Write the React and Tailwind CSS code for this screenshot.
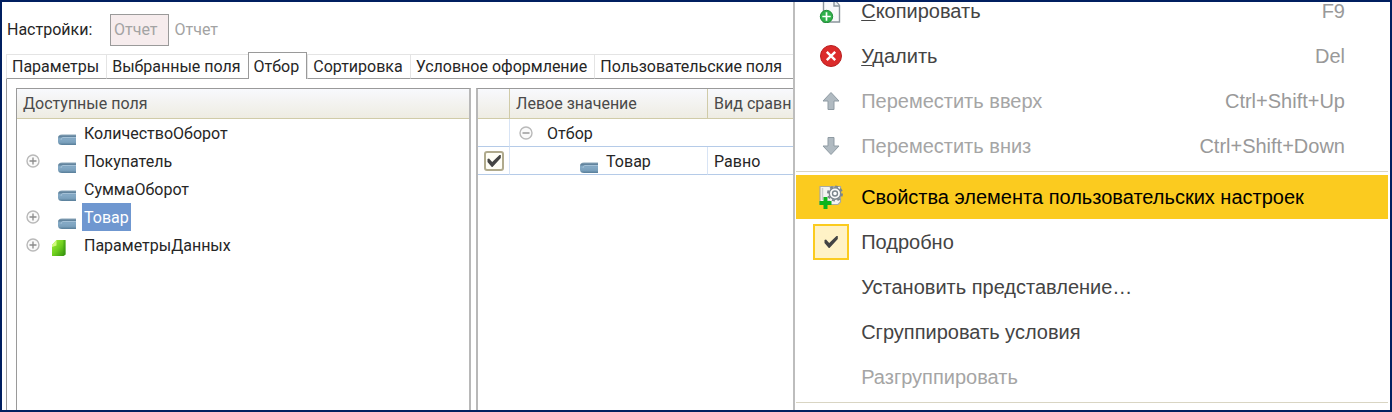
import React, { useState } from 'react';

const TABS = ['Параметры', 'Выбранные поля', 'Отбор', 'Сортировка', 'Условное оформление', 'Пользовательские поля'];

const FIELDS = [
  { name: 'КоличествоОборот', icon: 'field' },
  { name: 'Покупатель', icon: 'field', expandable: true },
  { name: 'СуммаОборот', icon: 'field' },
  { name: 'Товар', icon: 'field', expandable: true },
  { name: 'ПараметрыДанных', icon: 'params', expandable: true },
];

function Expander({ open }) {
  return (
    <svg width="14" height="14" viewBox="0 0 14 14" fill="none">
      <circle cx="7" cy="7" r="6" fill="#fafafa" stroke="#b9b9b9" strokeWidth="1.4" />
      <path d={open ? 'M3.5 7h7' : 'M3.5 7h7M7 3.5v7'} stroke="#8c8c8c" strokeWidth="1.3" />
    </svg>
  );
}

function FieldIcon() {
  return (
    <svg width="24" height="18" viewBox="0 0 24 18">
      <defs>
        <linearGradient id="bar" x1="0" y1="0" x2="0" y2="1">
          <stop offset="0" stopColor="#8aa5b8" />
          <stop offset="0.2" stopColor="#5f829c" />
          <stop offset="0.4" stopColor="#86abc7" />
          <stop offset="0.75" stopColor="#7aa0bc" />
          <stop offset="1" stopColor="#577d98" />
        </linearGradient>
      </defs>
      <path d="M24 7.5H10Q6 7.5 6 11v3.5Q6 18 10 18h14z" fill="url(#bar)" />
      <path d="M24 10.500H11Q9 10.500 9 13" fill="none" stroke="#a3c0d6" />
    </svg>
  );
}

function ParamsIcon() {
  return (
    <svg width="24" height="18" viewBox="0 0 24 18">
      <defs>
        <linearGradient id="leaf" x1="0" y1="0" x2="1" y2="1">
          <stop offset="0" stopColor="#a5ee3c" />
          <stop offset="0.5" stopColor="#6fcf1e" />
          <stop offset="1" stopColor="#2f8d0c" />
        </linearGradient>
      </defs>
      <path d="M4.500 1h9v14.500l-2 1.500H0V6z" fill="url(#leaf)" />
      <path d="M4.500 1v5.500L0 8V6z" fill="#d0fa7c" />
      <path d="M11.500 1h2v14.500l-2 1.500z" fill="#3c9a14" opacity="0.6" />
    </svg>
  );
}

function CopyIcon() {
  return (
    <svg width="24" height="24" viewBox="0 0 24 24" fill="none">
      <path d="M4.500 .5h11l5 6v16.500h-16z" fill="#f7f9fa" stroke="#8a959c" strokeWidth="1.4" />
      <path d="M15 1v6h5.500" fill="#e8edf0" stroke="#8a959c" strokeWidth="1.4" />
      <circle cx="7.500" cy="17.500" r="6.200" fill="#2fb04a" stroke="#218d38" />
      <path d="M7.500 13.300v8.400M3.300 17.500h8.400" stroke="#fff" strokeWidth="1.7" />
    </svg>
  );
}

function DeleteIcon() {
  return (
    <svg width="22" height="22" viewBox="0 0 22 22" fill="none">
      <circle cx="11" cy="11" r="10.500" fill="#dc2b2b" stroke="#b81f1f" />
      <path d="M6.800 6.800l8.400 8.400M15.200 6.800l-8.400 8.400" stroke="#fff" strokeWidth="2.400" />
    </svg>
  );
}

function ArrowIcon({ down }) {
  return (
    <svg width="18" height="20" viewBox="0 0 18 20">
      <path
        d={down ? 'M6 1.500h6v8.500h5L9 18.500 1 10h5z' : 'M9 1.500L17 10h-5v8.500H6V10H1z'}
        fill="#b0bac1"
        stroke="#8f9ba3"
        strokeLinejoin="round"
      />
    </svg>
  );
}

function SettingsIcon() {
  return (
    <svg width="26" height="26" viewBox="0 0 26 26" fill="none">
      <path d="M2 2.500h20.500V18L20 20.500H2z" fill="#f4f4f2" stroke="#a8aaa2" strokeWidth="1.200" />
      <path d="M4.500 4v12M11 16v4" stroke="#c9ccce" strokeWidth="1.500" />
      <circle cx="17" cy="9.500" r="7" stroke="#7c868d" strokeWidth="2" strokeDasharray="3 2.498" />
      <circle cx="17" cy="9.500" r="5.700" fill="#fbfbfb" stroke="#7c868d" strokeWidth="1.400" />
      <circle cx="17" cy="9.500" r="2.500" fill="#fff" stroke="#7c868d" strokeWidth="1.400" />
      <path d="M7.500 13v12M1.500 19h12" stroke="#0cb41c" strokeWidth="4" />
    </svg>
  );
}

function Check({ className }) {
  return (
    <svg className={className} width="14" height="14" viewBox="0 0 14 14" fill="none">
      <path d="M0.500 5l1.500-.5 3.200 3.500L12.500 1h1.300v3L5.500 13H4.800L0.500 8z" fill="#444" />
    </svg>
  );
}

function MenuItem({ icon, shortcut, disabled, active, children }) {
  const color = active ? 'bg-[#fbcb1f] text-black' : disabled ? 'text-[#a5a5a5]' : 'text-[#444444]';
  return (
    <button type="button" role="menuitem" disabled={disabled} className={`flex h-11 w-full items-center pl-[17px] pr-[43px] text-left ${color}`}>
      <span className="flex w-9 shrink-0 justify-center">{icon}</span>
      <span className="ml-3 flex-1 whitespace-nowrap">{children}</span>
      {shortcut && <span className="text-[#999999]">{shortcut}</span>}
    </button>
  );
}

function Separator() {
  return <div role="separator" className="my-[2px] h-px bg-[#d9d5c3]" />;
}

function ContextMenu() {
  const [detailed, setDetailed] = useState(true);

  return (
    <div role="menu" className="w-[43%] shrink-0 overflow-hidden border-l-2 border-[#bdbdbd] bg-white pl-px pr-[2px] font-['Liberation_Sans',Arial,sans-serif] text-[20px] leading-6">
      <div className="-mt-[13px] flex flex-col gap-px">
        <MenuItem icon={<CopyIcon />} shortcut="F9"><u className="decoration-1 underline-offset-2">С</u>копировать</MenuItem>
        <MenuItem icon={<DeleteIcon />} shortcut="Del"><u className="decoration-1 underline-offset-2">У</u>далить</MenuItem>
        <MenuItem icon={<ArrowIcon />} shortcut="Ctrl+Shift+Up" disabled>Переместить вверх</MenuItem>
        <MenuItem icon={<ArrowIcon down />} shortcut="Ctrl+Shift+Down" disabled>Переместить вниз</MenuItem>
        <Separator />
        <MenuItem icon={<SettingsIcon />} active>Свойства элемента пользовательских настроек</MenuItem>
        <label className="flex h-11 items-center pl-[17px] text-[#444444]">
          <span className="relative flex size-9">
            <input type="checkbox" checked={detailed} onChange={(e) => setDetailed(e.target.checked)} className="peer size-9 appearance-none border-2 border-[#fbcb1f] bg-[#fff2c6]" />
            <Check className="pointer-events-none absolute inset-0 m-auto hidden peer-checked:block" />
          </span>
          <span className="ml-3">Подробно</span>
        </label>
        <MenuItem>Установить представление…</MenuItem>
        <MenuItem>Сгруппировать условия</MenuItem>
        <MenuItem disabled>Разгруппировать</MenuItem>
        <Separator />
      </div>
    </div>
  );
}

function FieldTree() {
  const [selected, setSelected] = useState('Товар');

  return (
    <section className="min-w-0 border-l border-r-2 border-t border-l-[#9a9a9a] border-r-[#b8b8b8] border-t-[#9a9a9a]">
      <h2 className="h-[30px] border-b border-[#d0cba8] bg-linear-to-b from-[#f8f9fd] to-[#eeece2] pl-1.5 leading-[30px] text-[#4a4a4a]">Доступные поля</h2>
      <ul>
        {FIELDS.map((field) => (
          <li key={field.name} className="flex h-7 items-center">
            <span className="ml-[9px] w-3.5">{field.expandable && <Expander />}</span>
            <span className="mb-[2px] ml-3 self-end">{field.icon === 'params' ? <ParamsIcon /> : <FieldIcon />}</span>
            <button
              type="button"
              onClick={() => setSelected(field.name)}
              className={`ml-1.5 h-7 px-0.5 pt-px ${selected === field.name ? 'bg-[#6f97d0] text-white' : ''}`}
            >
              {field.name}
            </button>
          </li>
        ))}
      </ul>
    </section>
  );
}

function FilterTable() {
  const [used, setUsed] = useState(true);

  return (
    <section className="min-w-0 overflow-hidden border-l-2 border-t border-l-[#b8b8b8] border-t-[#9a9a9a]">
      <table className="w-full table-fixed border-separate border-spacing-0 whitespace-nowrap text-left">
        <colgroup>
          <col className="w-8" />
          <col className="w-[198px]" />
          <col />
        </colgroup>
        <thead>
          <tr className="bg-linear-to-b from-[#f8f9fd] to-[#eeece2] text-[#4a4a4a]">
            <th className="h-[30px] border-b border-r border-[#d0cba8] p-0" />
            <th className="h-[30px] border-b border-r border-[#d0cba8] p-0 pl-1.5 font-normal">Левое значение</th>
            <th className="h-[30px] border-b border-[#d0cba8] p-0 pl-1.5 font-normal">Вид сравн</th>
          </tr>
        </thead>
        <tbody>
          <tr>
            <td className="h-7 border-b border-r border-[#b5cbe8] border-r-[#d8e4f5] p-0" />
            <td colSpan={2} className="h-7 border-b border-[#b5cbe8] p-0">
              <div className="flex items-center pl-[9px]">
                <Expander open />
                <span className="ml-3.5 pt-0.5">Отбор</span>
              </div>
            </td>
          </tr>
          <tr>
            <td className="h-7 border-b border-r border-[#b5cbe8] border-r-[#d8e4f5] p-0">
              <label className="relative mx-auto flex size-5">
                <input
                  type="checkbox"
                  aria-label="Использовать"
                  checked={used}
                  onChange={(e) => setUsed(e.target.checked)}
                  className="peer size-5 appearance-none rounded-[3px] border-2 border-[#b0aa8c] bg-[#fffef6]"
                />
                <Check className="pointer-events-none absolute inset-0 m-auto hidden peer-checked:block" />
              </label>
            </td>
            <td className="h-7 border-b border-r border-[#b5cbe8] border-r-[#d8e4f5] p-0">
              <div className="flex h-[27px] items-center pl-16">
                <span className="mb-px self-end"><FieldIcon /></span>
                <span className="ml-2 pt-0.5">Товар</span>
              </div>
            </td>
            <td className="h-7 border-b border-[#b5cbe8] p-0 pl-1.5 pt-0.5">Равно</td>
          </tr>
        </tbody>
      </table>
    </section>
  );
}

export default function App() {
  const [tab, setTab] = useState('Отбор');

  return (
    <div className="flex min-h-screen overflow-hidden border-2 border-[#001f60] bg-white">
      <main className="flex min-w-0 flex-1 flex-col overflow-hidden pl-1 font-[Roboto,Arial,sans-serif] text-[16px] leading-5 text-[#262626]">
        <div className="mt-3 flex h-8 items-center">
          <span className="w-[104px] pl-px">Настройки:</span>
          <button type="button" className="h-8 border border-[#9a9a9a] bg-[#f6eced] pl-[3px] pr-2.5 text-[#a3a3a3]">Отчет</button>
          <span className="ml-1.5 text-[#a3a3a3]">Отчет</span>
        </div>

        <div className="mt-1.5 flex items-end">
          <div role="tablist" className="flex items-end whitespace-nowrap">
            {TABS.map((name) => (
              <button
                key={name}
                type="button"
                role="tab"
                aria-selected={tab === name}
                onClick={() => setTab(name)}
                className={
                  tab === name
                    ? 'h-[27px] shrink-0 border-x border-t border-[#9a9a9a] pl-[5px] pr-[7px] pt-0.5'
                    : 'h-[25px] shrink-0 border-b border-l border-t border-b-[#9a9a9a] border-l-[#e4e4e4] border-t-[#e4e4e4] pl-[5px] pr-[7px]'
                }
              >
                {name}
              </button>
            ))}
          </div>
          <div className="h-[25px] flex-1 border-b border-t border-b-[#9a9a9a] border-t-[#e4e4e4]" />
        </div>

        <div className="grid min-w-0 flex-1 grid-cols-[455fr_317fr] gap-[5px] border-l border-[#9a9a9a] pl-[9px] pt-[9px]">
          <FieldTree />
          <FilterTable />
        </div>
      </main>

      <ContextMenu />
    </div>
  );
}
